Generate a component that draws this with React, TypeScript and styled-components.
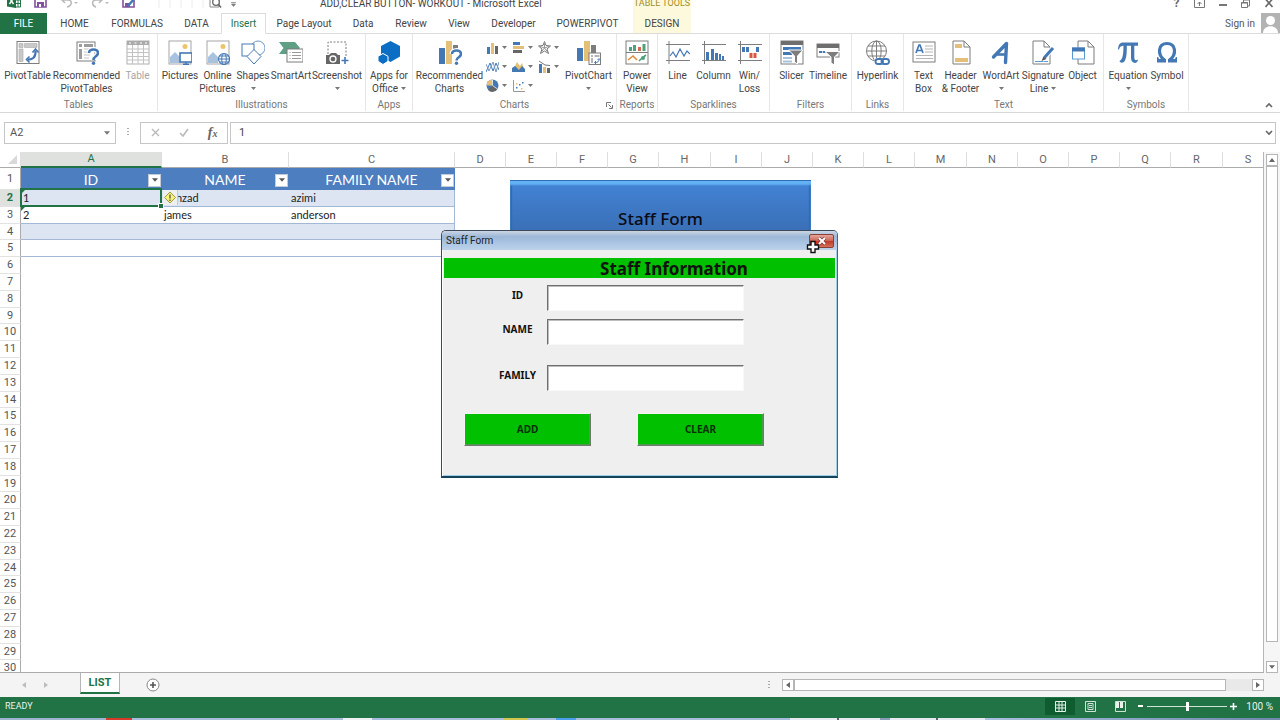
import React from "react";
import styled, { createGlobalStyle, css } from "styled-components";

const UI = `Roboto, "Noto Sans", sans-serif`;
const SHEET = `Lato, "Noto Sans", sans-serif`;
const FORM = `"Noto Sans", "Open Sans", sans-serif`;
const GREEN = "#217346";
const BLUE = "#4478b4";
const GRAY = "#7d7d7d";
const GOLD = "#e4bf77";

const Global = createGlobalStyle`
  * { box-sizing: border-box; }
  body { margin: 0; font-family: ${UI}; font-size: 10px; line-height: 13px; color: #444; background: #fff; }
  button, input { font: inherit; color: inherit; margin: 0; padding: 0; border: 0; border-radius: 0; background: none; }
  svg { display: block; flex: none; }
`;

const Page = styled.div`
  display: flex;
  flex-direction: column;
  height: 100vh;
  overflow: hidden;
`;

/* ---------- title bar and tabs ---------- */

const TitleBar = styled.header`
  display: flex;
  align-items: flex-end;
  height: 13px;
  flex: none;
  overflow: hidden;
`;
const QuickAccess = styled.div`
  display: flex;
  align-items: flex-end;
  flex: none;
  width: 320px;
  gap: 13px;
  padding: 0 0 5px 7px;
`;
const WindowTitle = styled.div`
  flex: none;
  width: 313px;
  padding-bottom: 3px;
  white-space: nowrap;
`;
const ContextTitle = styled.div`
  flex: none;
  width: 58px;
  height: 20px;
  display: flex;
  align-items: flex-end;
  justify-content: center;
  padding-bottom: 3px;
  font-size: 9px;
  color: #a08c28;
  background: #fdf9dc;
  white-space: nowrap;
`;
const WindowButtons = styled.div`
  display: flex;
  margin-left: auto;
  padding-bottom: 3px;
`;
const WindowButton = styled.button`
  display: flex;
  align-items: center;
  justify-content: center;
  width: 23px;
  height: 13px;
  font-size: 12px;
  font-weight: 700;
  color: #666;
`;
const TabRow = styled.nav`
  display: flex;
  flex: none;
  height: 21px;
  border-bottom: 1px solid #dcdcdc;
`;
const Tab = styled.button<{ $w: number; $kind?: "file" | "active" | "context" }>`
  flex: none;
  width: ${(p) => p.$w}px;
  height: 21px;
  white-space: nowrap;
  ${(p) => p.$kind === "file" && css`background: ${GREEN}; color: #fff;`}
  ${(p) => p.$kind === "active" && css`
    background: #fff; color: ${GREEN};
    border: 1px solid #dcdcdc; border-bottom-color: #fff;
  `}
  ${(p) => p.$kind === "context" && css`background: #fdf9dc; margin-left: 5px; height: 20px;`}
`;
const Account = styled.div`
  display: flex;
  align-items: center;
  gap: 6px;
  margin-left: auto;
  a { color: #555; text-decoration: none; }
`;

/* ---------- ribbon ---------- */

const Ribbon = styled.div`
  display: flex;
  flex: none;
  height: 79px;
  border-bottom: 1px solid #d8d8d8;
`;
const Group = styled.section<{ $w: number }>`
  position: relative;
  display: flex;
  flex-direction: column;
  flex: none;
  width: ${(p) => p.$w}px;
  height: 77px;
  padding-top: 6px;
  border-right: 1px solid #e6e6e6;
`;
const GroupItems = styled.div`
  display: flex;
  justify-content: center;
  flex: 1;
`;
const GroupName = styled.div`
  display: flex;
  justify-content: center;
  color: #777;
  height: 13px;
`;
const Launcher = styled.button`
  position: absolute;
  right: 2px;
  bottom: 2px;
  width: 8px;
  height: 8px;
`;
const Big = styled.button<{ $w: number; $off?: boolean }>`
  display: flex;
  flex-direction: column;
  align-items: center;
  flex: none;
  width: ${(p) => p.$w}px;
  white-space: nowrap;
  color: ${(p) => (p.$off ? "#a6a6a6" : "#444")};
  svg.icon { margin-bottom: 4px; }
`;
const Line = styled.span`
  display: flex;
  align-items: center;
  justify-content: center;
  gap: 3px;
  height: 13px;
`;
const MiniGrid = styled.div`
  display: grid;
  grid-template-columns: repeat(3, 26px);
  grid-auto-rows: 19px;
  width: 80px;
  padding-left: 2px;
`;
const Mini = styled.button`
  display: flex;
  align-items: center;
  gap: 3px;
  height: 14px;
`;
const Collapse = styled.button`
  align-self: flex-end;
  margin: 0 7px 3px auto;
  height: 8px;
`;

/* ---------- formula bar ---------- */

const FormulaBar = styled.div`
  display: flex;
  flex: none;
  align-items: center;
  height: 39px;
  padding: 0 4px;
`;
const Box = styled.div<{ $w?: number }>`
  display: flex;
  align-items: center;
  justify-content: space-between;
  height: 22px;
  border: 1px solid #c6c6c6;
  ${(p) => (p.$w ? css`flex: none; width: ${p.$w}px;` : css`flex: 1;`)}
`;
const NameInput = styled.input`
  width: 80px;
  padding-left: 5px;
  font-size: 11px;
  color: #555;
`;
const FormulaInput = styled.input`
  flex: 1;
  padding-left: 8px;
  font-size: 11px;
`;
const BarButton = styled.button<{ $w?: number }>`
  display: flex;
  align-items: center;
  justify-content: center;
  width: ${(p) => p.$w ?? 29}px;
  height: 20px;
`;
const FxText = styled.i`
  font-family: "Liberation Serif", serif;
  font-size: 14px;
  font-weight: 700;
  color: #666;
  sub { font-size: 10px; vertical-align: baseline; }
`;
const BoxGap = styled.div`
  flex: none;
  width: 2px;
`;
const Chevron = styled.button`
  padding: 0 2px;
`;
const Grip = styled.div`
  flex: none;
  width: 24px;
  display: flex;
  justify-content: center;
`;

/* ---------- sheet ---------- */

const SheetArea = styled.main`
  position: relative;
  display: flex;
  flex: 1;
  min-height: 0;
  overflow: hidden;
`;
const GridPane = styled.div`
  flex: 1;
  min-width: 0;
  overflow: hidden;
  border-right: 1px solid #b5b5b5;
  border-bottom: 1px solid #ababab;
`;
const Grid = styled.table`
  table-layout: fixed;
  width: 0;
  border-collapse: separate;
  border-spacing: 0;
  font-size: 11px;
  td, th { padding: 0; font-weight: 400; overflow: hidden; white-space: nowrap; }
`;
const ColHead = styled.th<{ $on?: boolean }>`
  height: 16px;
  line-height: 14px;
  color: ${(p) => (p.$on ? GREEN : "#666")};
  background: ${(p) => (p.$on ? "#dfe1df" : "#fff")};
  border-right: 1px solid #dedede;
  border-bottom: ${(p) => (p.$on ? `2px solid ${GREEN}` : "1px solid #ababab")};
`;
const Corner = styled.td`
  border-bottom: 1px solid #ababab;
  border-right: 1px solid #dedede;
  svg { margin-left: 8px; }
`;
const Row = styled.tr<{ $h: number }>`
  height: ${(p) => p.$h}px;
  line-height: 14px;
`;
const RowHead = styled.th<{ $on?: boolean }>`
  && { font-weight: ${(p) => (p.$on ? 700 : 400)}; }
  color: ${(p) => (p.$on ? GREEN : "#555")};
  background: ${(p) => (p.$on ? "#dfe1df" : "#fff")};
  border-right: 1px solid #ababab;
  border-bottom: 1px solid #e2e2e2;
`;
const HeadCell = styled.td`
  background: #4d7ebf;
  color: #fff;
  font-family: ${SHEET};
  font-size: 14px;
  text-align: center;
`;
const HeadInner = styled.div`
  display: grid;
  grid-template-columns: 1fr auto 1fr;
  align-items: center;
  padding: 2px 1px 0 0;
  button { justify-self: end; }
`;
const FilterButton = styled.button`
  display: flex;
  align-items: center;
  justify-content: center;
  width: 13px;
  height: 13px;
  background: #fff;
  border: 1px solid #c3cbd6;
`;
const Cell = styled.td<{ $band?: boolean; $last?: boolean }>`
  position: relative;
  color: #222;
  font-family: ${SHEET};
  background: ${(p) => (p.$band ? "#dce5f1" : "#fff")};
  border-bottom: 1px solid #a3b8d6;
  ${(p) => p.$last && css`border-right: 1px solid #a3b8d6;`}
  && { padding-left: 2px; }
`;
const ErrorMark = styled.span`
  position: absolute;
  left: 0;
  top: 0;
  border-top: 4px solid ${GREEN};
  border-right: 4px solid transparent;
`;
const Selection = styled.div`
  position: absolute;
  left: 20px;
  top: 36px;
  width: 142px;
  height: 19px;
  border: 2px solid ${GREEN};
  &::after {
    content: "";
    position: absolute;
    right: -3px;
    bottom: -3px;
    width: 4px;
    height: 4px;
    background: ${GREEN};
    outline: 1px solid #fff;
  }
`;
const Warning = styled.button`
  position: absolute;
  left: 163px;
  top: 38px;
  width: 15px;
  height: 15px;
  background: #eef0ee;
  border-right: 1px solid #c9c9c9;
`;
const ShapeButton = styled.button`
  position: absolute;
  left: 510px;
  top: 28px;
  width: 301px;
  height: 78px;
  padding-bottom: 2px;
  background: linear-gradient(#4383d6, #3566a6);
  box-shadow: inset 0 1px #2f6fb8, inset 0 5px 2px #62b2f4, inset 2px 0 1px #2f66ac, inset -2px 0 1px #2f66ac;
  font-family: ${FORM};
  font-size: 17px;
  font-weight: 500;
  color: #0a0a14;
`;

/* ---------- scroll bars ---------- */

const VScroll = styled.div`
  display: flex;
  flex-direction: column;
  align-items: center;
  flex: none;
  width: 16px;
  padding: 2px 0 0 0;
  background: #f6f6f6;
`;
const ScrollButton = styled.button`
  display: flex;
  align-items: center;
  justify-content: center;
  flex: none;
  width: 12px;
  height: 12px;
  background: #fff;
  border: 1px solid #b5b5b5;
`;
const VThumb = styled.div`
  flex: 1;
  width: 12px;
  margin-bottom: 19px;
  border: 1px solid #b5b5b5;
  background: #fff;
`;
const HTrack = styled.div`
  display: flex;
  flex: none;
  width: 482px;
  height: 12px;
  background: #e9e9e9;
`;
const HThumb = styled.div`
  width: 432px;
  margin-right: auto;
  border: 1px solid #b5b5b5;
  background: #fff;
`;

/* ---------- user form ---------- */

const Dialog = styled.form`
  position: absolute;
  left: 441px;
  top: 78px;
  width: 397px;
  height: 248px;
  display: flex;
  flex-direction: column;
  border: 1px solid #3b4a5c;
  border-right: 1px solid #2c6f8f;
  border-bottom: 2px solid #14435c;
  border-radius: 5px 5px 0 0;
  background: #efefef;
  box-shadow: inset 1px 0 #fff, inset -1px -1px #9fd0e6;
  font-family: ${FORM};
  color: #111;
`;
const DialogTitle = styled.div`
  display: flex;
  align-items: center;
  justify-content: space-between;
  flex: none;
  height: 19px;
  padding: 0 3px 0 4px;
  border-radius: 4px 4px 0 0;
  background: linear-gradient(#cbd5e2, #9db8d8 30%, #a9c4e2 60%, #bcd2ea);
`;
const DialogCaption = styled.span`
  font-family: ${UI};
  color: #222;
`;
const CloseButton = styled.button`
  display: flex;
  align-items: center;
  justify-content: center;
  width: 25px;
  height: 14px;
  border: 1px solid #8a4038;
  border-radius: 2px;
  background: linear-gradient(#e3a79c, #d0695a 45%, #c03a28 55%, #d4715c);
`;
const Banner = styled.h1`
  margin: 8px 0 7px 2px;
  padding-left: 69px;
  width: 391px;
  height: 20px;
  line-height: 22px;
  background: #00c000;
  font-size: 17px;
  font-weight: 700;
  text-align: center;
`;
const Field = styled.label<{ $after: number }>`
  display: flex;
  width: 302px;
  height: 26px;
  margin-bottom: ${(p) => p.$after}px;
  font-weight: 700;
`;
const FieldName = styled.span`
  width: 59px;
  margin-left: 46px;
  line-height: 21px;
  text-align: center;
`;
const FieldInput = styled.input`
  width: 197px;
  height: 26px;
  padding: 0 4px;
  background: #fff;
  border: 1px solid;
  border-color: #6f6f6f #f8f8f8 #f8f8f8 #6f6f6f;
  box-shadow: inset 1px 1px #bdbdbd;
`;
const Actions = styled.div`
  display: flex;
  gap: 46px;
  padding-left: 22px;
`;
const ActionButton = styled.button`
  width: 127px;
  height: 33px;
  background: #00c000;
  border: 1px solid;
  border-color: #f4f4f4 #6f7a6f #6f7a6f #f4f4f4;
  box-shadow: inset -1px -1px #4f9a4f;
  font-weight: 700;
  color: #0a300a;
`;
const Pointer = styled.svg`
  position: absolute;
  left: 806px;
  top: 88px;
`;

/* ---------- sheet tabs, status bar, task bar ---------- */

const SheetTabs = styled.div`
  display: flex;
  align-items: center;
  flex: none;
  height: 24px;
  padding-right: 16px;
  background: #f5f4f5;
`;
const NavArrows = styled.div`
  display: flex;
  gap: 18px;
  width: 80px;
  padding-left: 22px;
`;
const SheetTab = styled.button`
  align-self: flex-start;
  width: 40px;
  height: 21px;
  border: 1px solid #b5b5b5;
  border-top: 0;
  border-bottom: 2px solid ${GREEN};
  background: #fff;
  color: ${GREEN};
  font-size: 11px;
  font-weight: 700;
`;
const AddSheet = styled.button`
  margin-left: 26px;
`;
const SheetGrip = styled.div`
  margin: 0 12px 0 auto;
`;
const StatusBar = styled.footer`
  display: flex;
  align-items: center;
  flex: none;
  height: 21px;
  padding: 0 7px 3px 5px;
  background: ${GREEN};
  color: #e9f2ec;
`;
const StatusText = styled.span`
  font-size: 9px;
  margin-right: auto;
`;
const ViewButton = styled.button<{ $on?: boolean }>`
  display: flex;
  align-items: center;
  justify-content: center;
  width: 30px;
  height: 17px;
  background: ${(p) => (p.$on ? "#0e5c2f" : "transparent")};
`;
const ZoomStep = styled.button`
  display: flex;
  align-items: center;
  justify-content: center;
  width: 12px;
  height: 13px;
`;
const ZoomRange = styled.input`
  appearance: none;
  width: 80px;
  height: 12px;
  background: linear-gradient(#cfe3d7, #cfe3d7) center / 100% 1px no-repeat;
  &::-webkit-slider-thumb {
    appearance: none;
    width: 3px;
    height: 9px;
    background: #fff;
  }
`;
const ZoomValue = styled.output`
  width: 34px;
  text-align: right;
`;
const TaskBar = styled.div`
  flex: none;
  height: 2px;
  background: linear-gradient(
    90deg,
    #9db3cf 0 106px, #d8392c 106px 132px, #a8bddd 132px 343px, #eef2f2 343px 372px,
    #a8bddd 372px 503px, #d3c64f 503px 528px, #a8bddd 528px 556px, #4ea0ee 556px 576px,
    #a8bddd 576px 790px, #e6e9f0 790px 837px, #56606e 837px 839px, #e6e9f0 839px 880px,
    #8c9db8 880px 890px, #e6e9f0 890px 936px, #56606e 936px 938px, #e6e9f0 938px 985px,
    #a9c0de 985px, #7089ad 1268px
  );
`;

/* ---------- icons ---------- */

const Caret = ({ s = 5, c = "#777" }: { s?: number; c?: string }) => (
  <svg width={s} height={s - 2} viewBox="0 0 6 3.6"><path d="M0 0h6L3 3.6z" fill={c} /></svg>
);

const Icon = ({ children }: { children: React.ReactNode }) => (
  <svg className="icon" width="24" height="25" viewBox="0 0 24 25" fill="none" strokeLinecap="butt">{children}</svg>
);
const Small = ({ children }: { children: React.ReactNode }) => (
  <svg width="13" height="13" viewBox="0 0 13 13" fill="none">{children}</svg>
);

const icons: Record<string, React.ReactNode> = {
  pivot: (
    <Icon>
      <rect x="1" y="1.500" width="22" height="22" stroke={GRAY} fill="#fff" />
      <path d="M3 3.500h4v4H3zM3 9h4v12.500H3zM8.500 3.500H21v4H8.500z" fill="#c9c9c9" stroke="#aaa" strokeWidth=".6" />
      <path d="M11.500 19.500c5 .500 8.500-2 8-9" stroke={BLUE} strokeWidth="2.200" />
      <path d="M16.500 12.500l3-3.500 3 3.500M13.500 16.500l-3 3 3 3" stroke={BLUE} strokeWidth="1.600" />
    </Icon>
  ),
  recPivot: (
    <Icon>
      <rect x="2" y="2" width="18" height="19" stroke={GRAY} fill="#fff" />
      <path d="M4 4h3v3H4zM4 9h3v10H4zM9 4h9v3H9z" fill="#9c9c9c" />
      <path d="M9 9h9M9 12h6M9 15h6M9 18h5" stroke="#c4c4c4" />
      <path d="M14 13c0-4 9-5 9 0 0 3.500-4.500 3-4.500 7" stroke="#fff" strokeWidth="5" />
      <path d="M14 13c0-4.500 9-5 9 0 0 3.500-4.500 3-4.500 7" stroke={BLUE} strokeWidth="2.600" />
      <circle cx="18.500" cy="23.200" r="1.700" fill={BLUE} />
    </Icon>
  ),
  table: (
    <Icon>
      <rect x="1" y="1" width="22" height="23" stroke="#b0b0b0" fill="#fff" />
      <path d="M1 1h22v4H1z" fill="#aaa" />
      <path d="M1 9h22M1 12.500h22M1 16.500h22M1 20h22M6.500 5v19M12 5v19M17.500 5v19" stroke="#c2c2c2" />
      <path d="M3 3h2M8.500 3h2M14 3h2M19 3h2" stroke="#fff" />
    </Icon>
  ),
  pictures: (
    <Icon>
      <rect x="1" y="1" width="22" height="23" stroke="#a5a5a5" fill="#fff" />
      <path d="M2 23V17l5-5 5 5v6z" fill="#a9c3df" />
      <circle cx="17" cy="6.500" r="2.500" fill="#ecc56a" />
      <rect x="12" y="13" width="12" height="9" fill="#fff" stroke={BLUE} strokeWidth="1.600" />
      <path d="M15 24.300h6M18 22v2" stroke={BLUE} strokeWidth="1.400" />
    </Icon>
  ),
  online: (
    <Icon>
      <rect x="1" y="1" width="22" height="23" stroke="#a5a5a5" fill="#fff" />
      <path d="M2 23V17l5-5 5 5v6z" fill="#a9c3df" />
      <circle cx="17" cy="6.500" r="2.500" fill="#ecc56a" />
      <circle cx="18" cy="19" r="5.500" fill="#fff" stroke={BLUE} strokeWidth="1.200" />
      <ellipse cx="18" cy="19" rx="2.300" ry="5.500" stroke={BLUE} />
      <path d="M12.500 19h11M13.500 16h9M13.500 22h9" stroke={BLUE} />
    </Icon>
  ),
  shapes: (
    <Icon>
      <circle cx="17" cy="8" r="7" stroke="#6e97c6" fill="#fff" />
      <rect x="1" y="4" width="12" height="12" stroke={BLUE} fill="#fff" />
      <path d="M13 9.500l7 7-7 7.500-7-7.500z" stroke={BLUE} fill="#fff" />
    </Icon>
  ),
  smartart: (
    <Icon>
      <path d="M0 2h16l5 6-5 6H0l4.500-6z" fill="#5f9f84" />
      <rect x="8" y="9" width="16" height="13" fill="#fff" stroke={GRAY} />
      <path d="M10.500 12.500h1M10.500 15.500h1M10.500 18.500h1M13 12.500h9M13 15.500h9M13 18.500h9" stroke="#9a9a9a" />
    </Icon>
  ),
  screenshot: (
    <Icon>
      <path d="M3 14V2h18v15" stroke={GRAY} strokeDasharray="2 1.500" />
      <path d="M1 15h3l2-2h5l2 2h2v9H1z" fill="#666" />
      <circle cx="8" cy="19" r="3" stroke="#fff" strokeWidth="1.300" />
      <path d="M20 17v7M16.500 20.500h7" stroke={BLUE} strokeWidth="1.600" />
    </Icon>
  ),
  apps: (
    <Icon>
      <path d="M13.500 1l9.500 5v10.500L13.500 22 4 16.500V6z" fill="#0a6fc4" />
      <path d="M6 13.500l5 2.800v5L6 24.500l-5-3.200v-5z" fill="#0a6fc4" stroke="#fff" />
    </Icon>
  ),
  recChart: (
    <Icon>
      <path d="M1 8h6v16H1z" fill={BLUE} />
      <path d="M8 1h6v23H8z" fill={GOLD} />
      <path d="M15 5h5v5h-5z" fill={GRAY} />
      <path d="M14 14c0-4.500 9-5 9 0 0 3.500-4.500 3-4.500 6.500" stroke="#fff" strokeWidth="5" />
      <path d="M14 14c0-4.500 9-5 9 0 0 3.500-4.500 3-4.500 6.500" stroke={BLUE} strokeWidth="2.600" />
      <circle cx="18.500" cy="23.200" r="1.700" fill={BLUE} />
    </Icon>
  ),
  pivotChart: (
    <Icon>
      <path d="M0 8h6v13H0z" fill={BLUE} />
      <path d="M7 1h6v20H7z" fill={GOLD} />
      <path d="M14 5h5v8h-5z" fill={GRAY} />
      <rect x="12" y="13" width="11.500" height="11.500" fill="#fff" stroke={GRAY} />
      <path d="M14 15h2v2h-2zM14 18h2v5h-2zM17.500 15h5v2h-5z" fill="#b5b5b5" />
      <path d="M18 22.500c3 0 4-1 4-3.500M20.500 20l1.500-1.500 1.500 1.500M19 21l-1.500 1.500L19 24" stroke={BLUE} />
    </Icon>
  ),
  power: (
    <Icon>
      <rect x="1" y="1" width="22" height="23" stroke={GRAY} fill="#fff" />
      <path d="M1 12.500h22" stroke={GRAY} />
      <path d="M4 7h3v4H4z" fill="#4fa07c" />
      <path d="M8 5h3v6H8z" fill="#4fa07c" />
      <path d="M13 7h3v4h-3z" fill="#d9694c" />
      <path d="M17.500 4h3v7h-3z" fill="#4fa07c" />
      <path d="M3 20l5-4 4 4" stroke="#dd8b3c" strokeWidth="1.600" />
      <path d="M14 21l3-3 4-3" stroke="#4fa07c" strokeWidth="1.600" />
      <circle cx="18" cy="18" r="2" fill="#4fa07c" />
    </Icon>
  ),
  line: (
    <Icon>
      <path d="M3 1v23M0 4.500h24M0 20.500h24" stroke={GRAY} />
      <path d="M4 16l3-4 3 5 4-8 4 7 3-5 3 3" stroke={BLUE} strokeWidth="1.200" />
    </Icon>
  ),
  column: (
    <Icon>
      <path d="M2.500 1v23M0 4.500h24M0 20.500h24" stroke={GRAY} />
      <path d="M4 12h3v8H4zM9 9h3v11H9zM13 13h3v7h-3zM17 14h2v6h-2zM20 16h2v4h-2z" fill={BLUE} />
    </Icon>
  ),
  winloss: (
    <Icon>
      <path d="M2.500 1v23M0 4.500h24M0 20.500h24" stroke={GRAY} />
      <path d="M4 7h3v5H4zM8 7h3v5H8zM18 7h3v5h-3z" fill={BLUE} />
      <path d="M11.500 13h3v5h-3zM15.500 13h3v5h-3z" fill="#d9573f" />
    </Icon>
  ),
  slicer: (
    <Icon>
      <rect x="1" y="1" width="22" height="23" stroke={GRAY} fill="#fff" />
      <path d="M1 1h22v4H1z" fill="#6e6e6e" />
      <path d="M3 7h18v3H3zM3 12h9v3H3z" fill={BLUE} />
      <path d="M3 17h9v2H3zM3 20.500h9v2H3z" fill="#a9c3df" />
      <path d="M8.500 10H23l-5.500 6v8l-3-2v-6z" fill={GRAY} stroke="#fff" />
    </Icon>
  ),
  timeline: (
    <Icon>
      <rect x="1" y="4" width="22" height="13" stroke={GRAY} fill="#fff" />
      <path d="M1 4h22v4H1z" fill="#6e6e6e" />
      <path d="M3 12h8" stroke={BLUE} strokeWidth="2" strokeDasharray="3 .7" />
      <path d="M9 11.500h15l-5.500 5.500v8l-3.500-2v-6z" fill={GRAY} stroke="#fff" />
    </Icon>
  ),
  hyperlink: (
    <Icon>
      <circle cx="10.500" cy="11" r="10" stroke={GRAY} />
      <ellipse cx="10.500" cy="11" rx="4.700" ry="10" stroke={GRAY} />
      <path d="M10.500 1v20M.5 11h20M2 6h17M2 16h17" stroke={GRAY} />
      <path d="M8.500 18H24v7H8.500z" fill="#fff" />
      <rect x="9.500" y="19" width="7.500" height="5" rx="2.500" stroke={BLUE} strokeWidth="1.900" />
      <rect x="15.500" y="19" width="7.500" height="5" rx="2.500" stroke={BLUE} strokeWidth="1.900" />
    </Icon>
  ),
  textbox: (
    <Icon>
      <rect x="1" y="2" width="22" height="20" stroke={GRAY} fill="#fff" />
      <path d="M4 13L7 5h1l3 8M5.200 10.500h4.600" stroke={BLUE} strokeWidth="1.700" />
      <path d="M13 6h8M13 9h8M13 12h8M4 15.500h17M4 18.500h17" stroke="#b5b5b5" />
    </Icon>
  ),
  header: (
    <Icon>
      <path d="M4 1h11l6 6v17H4z" stroke={GRAY} fill="#fff" />
      <path d="M15 1v6h6" stroke={GRAY} />
      <path d="M6 4h7v4H6zM6 18h13v4H6z" fill={GOLD} />
    </Icon>
  ),
  wordart: (
    <Icon>
      <path d="M4.500 17L17.500 3.500l-1 19" stroke={BLUE} strokeWidth="3.400" strokeLinejoin="round" strokeLinecap="round" />
      <path d="M8 14.500h9" stroke={BLUE} strokeWidth="2.600" />
    </Icon>
  ),
  signature: (
    <Icon>
      <path d="M2 1h11l6 6v17H2z" stroke={GRAY} fill="#fff" />
      <path d="M13 1v6h6" stroke={GRAY} />
      <path d="M4 21.500h13" stroke="#5b9bd5" />
      <path d="M22 8L11 20" stroke="#fff" strokeWidth="5" />
      <path d="M22 8L13.500 17.500" stroke={BLUE} strokeWidth="3" />
      <path d="M12.500 16.500l3 2.500-5 2z" fill="#555" />
    </Icon>
  ),
  object: (
    <Icon>
      <path d="M7 1h10l6 6v17H7z" stroke={GRAY} fill="#fff" />
      <path d="M17 1v6h6" stroke={GRAY} />
      <rect x="1.500" y="8" width="12" height="11" stroke="#5b9bd5" fill="#fff" />
      <path d="M1 7.500h13v4H1z" fill={BLUE} />
    </Icon>
  ),
  pi: (
    <Icon>
      <path d="M2 9.500C2.500 4 4 2.500 8 2.500h14v3.300H8c-3 0-4 .700-5 3.700z" fill={BLUE} />
      <path d="M7.500 5h3.300c0 7 0 12-1.800 15.500-1.500 3-5 2.500-5.500.500 3-1.500 4-6 4-16zM15 5h3.300v12c0 3.500 1.500 4 3.700 2.500-.2 5-7 4.500-7-1.500z" fill={BLUE} />
    </Icon>
  ),
  omega: (
    <Icon>
      <path d="M9.500 20C2 14.500 3 3.500 12 3.500s10 11 2.500 16.500" stroke={BLUE} strokeWidth="3.200" />
      <path d="M2 17h1.200c.3 1.800.8 2 2.300 2h5.500v3.500H2zM22 17h-1.200c-.3 1.800-.8 2-2.300 2H13v3.500h9z" fill={BLUE} />
    </Icon>
  ),
};

const miniIcons: React.ReactNode[] = [
  <Small key="c"><path d="M1 6h3v7H1z" fill={BLUE} /><path d="M5 2h3v11H5z" fill={GOLD} /><path d="M9 5h3v8H9z" fill="#666" /></Small>,
  <Small key="b"><path d="M1 1h7v3H1z" fill={BLUE} /><path d="M1 5h11v3H1z" fill={GOLD} /><path d="M1 9h9v3H1z" fill="#666" /></Small>,
  <Small key="r"><path d="M6.500 .5L8 4.500l4.500.5L9 8l1.500 4.500-4-2.500-4 2.500L4 8 .5 5 5 4.500z" stroke="#777" /><path d="M6.500 1v6M12 5L6.500 7l4 5M2.500 12l4-5L1 5" stroke="#999" /></Small>,
  <Small key="l"><path d="M0 12l4-9 3 8 3-8 3 7" stroke={BLUE} /><path d="M0 4l3 7 4-9 3 10 3-10" stroke="#7397c2" /></Small>,
  <Small key="a"><path d="M0 12l5-10 3 4 2-3 3 9z" fill={GOLD} /><path d="M0 12V8l3-2 4 4 3-4 3 3v3z" fill={BLUE} /></Small>,
  <Small key="m"><path d="M1 4h3v9H1z" fill={BLUE} /><path d="M5 7h3v6H5z" fill={GOLD} /><path d="M9 8h3v5H9z" fill="#666" /><path d="M1 1l6 4 5 .500" stroke="#777" /></Small>,
  <Small key="p"><circle cx="6.500" cy="6.500" r="6" fill={BLUE} /><path d="M6.500 6.500V.5a6 6 0 0 0-6 6z" fill={GOLD} /><path d="M6.500 6.500L2 11a6 6 0 0 0 9.500-1z" fill="#666" /><path d="M6.500.5v6l5 3.500" stroke="#fff" strokeWidth=".7" /></Small>,
  <Small key="s"><path d="M1.500 1v11.500H13" stroke="#999" /><path d="M4 8h1.500v1.500H4zM7 5h1.500v1.500H7zM10 3h1.500v1.500H10z" fill={BLUE} /><path d="M4 4h1.500v1.500H4zM9 9h1.500v1.500H9z" fill={GOLD} /></Small>,
];

/* ---------- data ---------- */

type Item = { icon: string; w: number; lines: string[]; drop?: boolean; off?: boolean };

const groups: { name: string; w: number; items: Item[] }[] = [
  { name: "Tables", w: 158, items: [
    { icon: "pivot", w: 51, lines: ["PivotTable"] },
    { icon: "recPivot", w: 67, lines: ["Recommended", "PivotTables"] },
    { icon: "table", w: 35, lines: ["Table"], off: true },
  ] },
  { name: "Illustrations", w: 208, items: [
    { icon: "pictures", w: 38, lines: ["Pictures"] },
    { icon: "online", w: 37, lines: ["Online", "Pictures"] },
    { icon: "shapes", w: 34, lines: ["Shapes", ""], drop: true },
    { icon: "smartart", w: 42, lines: ["SmartArt"] },
    { icon: "screenshot", w: 50, lines: ["Screenshot", ""], drop: true },
  ] },
  { name: "Apps", w: 47, items: [{ icon: "apps", w: 46, lines: ["Apps for", "Office"], drop: true }] },
  { name: "Charts", w: 204, items: [
    { icon: "recChart", w: 68, lines: ["Recommended", "Charts"] },
    { icon: "pivotChart", w: 50, lines: ["PivotChart", ""], drop: true },
  ] },
  { name: "Reports", w: 41, items: [{ icon: "power", w: 40, lines: ["Power", "View"] }] },
  { name: "Sparklines", w: 112, items: [
    { icon: "line", w: 36, lines: ["Line"] },
    { icon: "column", w: 36, lines: ["Column"] },
    { icon: "winloss", w: 36, lines: ["Win/", "Loss"] },
  ] },
  { name: "Filters", w: 82, items: [
    { icon: "slicer", w: 35, lines: ["Slicer"] },
    { icon: "timeline", w: 38, lines: ["Timeline"] },
  ] },
  { name: "Links", w: 52, items: [{ icon: "hyperlink", w: 50, lines: ["Hyperlink"] }] },
  { name: "Text", w: 200, items: [
    { icon: "textbox", w: 34, lines: ["Text", "Box"] },
    { icon: "header", w: 40, lines: ["Header", "& Footer"] },
    { icon: "wordart", w: 41, lines: ["WordArt", ""], drop: true },
    { icon: "signature", w: 43, lines: ["Signature", "Line"], drop: true },
    { icon: "object", w: 36, lines: ["Object"] },
  ] },
  { name: "Symbols", w: 85, items: [
    { icon: "pi", w: 42, lines: ["Equation", ""], drop: true },
    { icon: "omega", w: 36, lines: ["Symbol"] },
  ] },
];

const tabs: [string, number, ("file" | "active" | "context")?][] = [
  ["FILE", 47, "file"], ["HOME", 55], ["FORMULAS", 70], ["DATA", 49], ["Insert", 45, "active"],
  ["Page Layout", 76], ["Data", 42], ["Review", 54], ["View", 42], ["Developer", 67],
  ["POWERPIVOT", 81], ["DESIGN", 58, "context"],
];

const wideCols = [141, 127, 166];
const letters = "DEFGHIJKLMNOPQRS".split("");
const people = [["1", "behzad", "azimi"], ["2", "james", "anderson"], ["", "", ""], ["", "", ""]];
const emptyRows = Array.from({ length: 25 }, (_, i) => i + 6);
const rowHeight = (n: number) => (n % 5 === 4 ? 16 : 17);

const BigButton = ({ item }: { item: Item }) => (
  <Big $w={item.w} $off={item.off} type="button">
    {icons[item.icon]}
    {item.lines.map((text, i) => (
      <Line key={i}>
        {text}
        {item.drop && i === item.lines.length - 1 && <Caret />}
      </Line>
    ))}
  </Big>
);

export default function App() {
  return (
    <Page>
      <Global />
      <TitleBar>
        <QuickAccess>
          <svg width="14" height="14" viewBox="0 0 14 14"><path d="M8 2h5.500v11H8" fill="#fff" stroke={GREEN} /><path d="M9 6h4M9 9.500h4M11 3v10" stroke={GREEN} /><path d="M0 2l9-2v14l-9-1.500z" fill={GREEN} /><path d="M2.500 4l4 6M6.500 4l-4 6" stroke="#fff" strokeWidth="1.400" /></svg>
          <svg width="13" height="14" viewBox="0 0 13 14"><path d="M1 1h11v12H1z" fill="#fff" stroke="#8350a0" strokeWidth="1.600" /><path d="M3 8h7v5H3z" fill="#8350a0" /><path d="M5 10h2v3H5z" fill="#fff" /></svg>
          <svg width="18" height="14" viewBox="0 0 18 14" fill="none"><path d="M2 6h6c5 0 4 6-1 7M5 3L2 6l3 3" stroke="#b9b9b9" strokeWidth="1.500" /><path d="M14 8h4l-2 2z" fill="#b9b9b9" /></svg>
          <svg width="18" height="14" viewBox="0 0 18 14" fill="none"><path d="M10 6H5c-5 0-4 6 0 7M8 3l3 3-3 3" stroke="#b9b9b9" strokeWidth="1.500" /><path d="M14 8h4l-2 2z" fill="#b9b9b9" /></svg>
          <svg width="13" height="14" viewBox="0 0 13 14"><path d="M1 1h11v12H1z" fill="#fff" stroke="#8350a0" strokeWidth="1.600" /><path d="M3 9h5v4H3z" fill="#8350a0" /><path d="M12 5l-6 7" stroke={BLUE} strokeWidth="2.400" /></svg>
          <svg width="92" height="14" viewBox="0 0 92 14" fill="none"><path d="M11 0v14M22 0v14M33 0v14M44 0v14M55 0v14" stroke="#ececec" /><path d="M68 1h9v12h-9z" stroke="#8a8a8a" transform="translate(-6 0)" /><circle cx="68" cy="8" r="3.300" fill="#fff" stroke="#666" strokeWidth="1.300" /><path d="M70.500 10.500l2.500 3" stroke="#666" strokeWidth="1.600" /><path d="M83 8.500h5M83.500 10h4l-2 2.500z" stroke="#888" strokeWidth=".8" fill="#777" /></svg>
        </QuickAccess>
        <WindowTitle>ADD,CLEAR BUTTON- WORKOUT - Microsoft Excel</WindowTitle>
        <ContextTitle>TABLE TOOLS</ContextTitle>
        <WindowButtons>
          <WindowButton aria-label="Help">?</WindowButton>
          <WindowButton aria-label="Ribbon display options">
            <svg width="11" height="11" viewBox="0 0 11 11" fill="none"><path d="M.5.5h10v9H.5z" stroke="#777" /><path d="M5.500 8V4M3.500 6l2-2 2 2" stroke="#777" /></svg>
          </WindowButton>
          <WindowButton aria-label="Minimize">
            <svg width="8" height="11" viewBox="0 0 8 11"><path d="M0 6h8v2H0z" fill="#777" /></svg>
          </WindowButton>
          <WindowButton aria-label="Restore">
            <svg width="9" height="10" viewBox="0 0 9 10" fill="none"><path d="M.5 3.500h6v5h-6zM2.500 3V1h6v6H7M0 4h7" stroke="#777" /></svg>
          </WindowButton>
          <WindowButton aria-label="Close">
            <svg width="8" height="9" viewBox="0 0 8 9" fill="none"><path d="M.5 0l7 8M7.500 0l-7 8" stroke="#666" strokeWidth="1.600" /></svg>
          </WindowButton>
        </WindowButtons>
      </TitleBar>

      <TabRow>
        {tabs.map(([label, w, kind]) => (
          <Tab key={label} $w={w} $kind={kind} type="button">{label}</Tab>
        ))}
        <Account>
          <a href="#signin">Sign in</a>
          <svg width="19" height="20" viewBox="0 0 19 20"><path d="M0 0h19v20H0z" fill="#b3b3b3" /><circle cx="9.500" cy="7.500" r="4.500" fill="#fff" /><path d="M2 20c0-9 15-9 15 0z" fill="#fff" /></svg>
        </Account>
      </TabRow>

      <Ribbon>
        {groups.map((g) => (
          <Group key={g.name} $w={g.w}>
            <GroupItems>
              <BigButton item={g.items[0]} />
              {g.name === "Charts" && (
                <MiniGrid>
                  {miniIcons.map((icon, i) => (
                    <Mini key={i} type="button" aria-label={`Chart type ${i + 1}`}>{icon}<Caret /></Mini>
                  ))}
                </MiniGrid>
              )}
              {g.items.slice(1).map((item) => <BigButton key={item.icon} item={item} />)}
            </GroupItems>
            <GroupName>{g.name}</GroupName>
            {g.name === "Charts" && (
              <Launcher type="button" aria-label="Chart options">
                <svg width="7" height="7" viewBox="0 0 7 7" fill="none"><path d="M.5 5V.5H5M2.500 2.500l3 3M6.500 3v3.500H3" stroke="#777" /></svg>
              </Launcher>
            )}
          </Group>
        ))}
        <Collapse type="button" aria-label="Collapse the ribbon">
          <svg width="8" height="6" viewBox="0 0 8 6" fill="none"><path d="M1 5l3-3 3 3" stroke="#666" strokeWidth="1.600" /></svg>
        </Collapse>
      </Ribbon>

      <FormulaBar>
        <Box $w={112}>
          <NameInput aria-label="Name box" defaultValue="A2" />
          <BarButton $w={16} type="button" aria-label="Names"><Caret s={6} /></BarButton>
        </Box>
        <Grip><svg width="2" height="9" viewBox="0 0 2 9"><path d="M0 0h2v1H0zM0 3h2v1H0zM0 6h2v1H0z" fill="#aaa" /></svg></Grip>
        <Box $w={88}>
          <BarButton type="button" aria-label="Cancel"><svg width="9" height="9" viewBox="0 0 9 9"><path d="M1 1l7 7M8 1L1 8" stroke="#b9b9b9" strokeWidth="1.400" /></svg></BarButton>
          <BarButton type="button" aria-label="Enter"><svg width="10" height="9" viewBox="0 0 10 9" fill="none"><path d="M1 5l3 3 5-7" stroke="#b9b9b9" strokeWidth="1.600" /></svg></BarButton>
          <BarButton type="button" aria-label="Insert function"><FxText>f<sub>x</sub></FxText></BarButton>
        </Box>
        <BoxGap />
        <Box>
          <FormulaInput aria-label="Formula" defaultValue="1" />
          <Chevron type="button" aria-label="Expand formula bar"><svg width="8" height="6" viewBox="0 0 8 6" fill="none"><path d="M1 1l3 3 3-3" stroke="#666" strokeWidth="1.600" /></svg></Chevron>
        </Box>
      </FormulaBar>

      <SheetArea>
        <GridPane>
          <Grid>
            <colgroup>
              <col width={21} />
              {wideCols.map((w) => <col key={w} width={w} />)}
              {letters.map((l, i) => <col key={l} width={i % 5 === 4 ? 52 : 51} />)}
            </colgroup>
            <thead>
              <tr>
                <Corner><svg width="9" height="9" viewBox="0 0 9 9"><path d="M9 0v9H0z" fill="#d9d9d9" /></svg></Corner>
                <ColHead $on scope="col">A</ColHead>
                {["B", "C", ...letters].map((l) => <ColHead key={l} scope="col">{l}</ColHead>)}
              </tr>
            </thead>
            <tbody>
              <Row $h={22}>
                <RowHead scope="row">1</RowHead>
                {["ID", "NAME", "FAMILY NAME"].map((h) => (
                  <HeadCell key={h}>
                    <HeadInner>
                      <span />
                      {h}
                      <FilterButton type="button" aria-label={`Filter ${h}`}><Caret s={6} c="#555" /></FilterButton>
                    </HeadInner>
                  </HeadCell>
                ))}
                <td colSpan={16} />
              </Row>
              {people.map((p, i) => (
                <Row key={i} $h={rowHeight(i + 2)}>
                  <RowHead scope="row" $on={i === 0}>{i + 2}</RowHead>
                  {p.map((v, c) => (
                    <Cell key={c} $band={i % 2 === 0} $last={c === 2}>
                      {c === 0 && v && <ErrorMark />}
                      {v}
                    </Cell>
                  ))}
                  <td colSpan={16} />
                </Row>
              ))}
              {emptyRows.map((n) => (
                <Row key={n} $h={rowHeight(n)}>
                  <RowHead scope="row">{n}</RowHead>
                  <td colSpan={19} />
                </Row>
              ))}
            </tbody>
          </Grid>
        </GridPane>
        <VScroll>
          <ScrollButton type="button" aria-label="Scroll up"><svg width="6" height="4" viewBox="0 0 6 4"><path d="M0 4h6L3 0z" fill="#666" /></svg></ScrollButton>
          <VThumb />
          <ScrollButton type="button" aria-label="Scroll down"><Caret s={6} c="#666" /></ScrollButton>
        </VScroll>

        <Selection />
        <Warning type="button" aria-label="Number stored as text">
          <svg width="14" height="15" viewBox="0 0 14 15"><path d="M7 2l5.500 5.500L7 13 1.500 7.500z" fill="#f6f276" stroke="#a09a4c" /><path d="M7 4.500v4M7 9.500V11" stroke="#555" strokeWidth="1.300" /></svg>
        </Warning>
        <ShapeButton type="button">Staff Form</ShapeButton>

        <Dialog onSubmit={(e) => e.preventDefault()}>
          <DialogTitle>
            <DialogCaption>Staff Form</DialogCaption>
            <CloseButton type="button" aria-label="Close form">
              <svg width="10" height="8" viewBox="0 0 10 8"><path d="M2 1l6 6M8 1L2 7" stroke="#7a3a34" strokeWidth="3.400" /><path d="M2 1l6 6M8 1L2 7" stroke="#fff" strokeWidth="2" /></svg>
            </CloseButton>
          </DialogTitle>
          <Banner>Staff Information</Banner>
          <Field $after={8}><FieldName>ID</FieldName><FieldInput type="text" /></Field>
          <Field $after={20}><FieldName>NAME</FieldName><FieldInput type="text" /></Field>
          <Field $after={22}><FieldName>FAMILY</FieldName><FieldInput type="text" /></Field>
          <Actions>
            <ActionButton type="submit">ADD</ActionButton>
            <ActionButton type="reset">CLEAR</ActionButton>
          </Actions>
        </Dialog>
        <Pointer width="16" height="14" viewBox="0 0 16 14">
          <circle cx="8" cy="5" r="4" fill="#e02a1c" />
          <path d="M5 1.500h4v3.500h3.500v4H9v3.500H5V9H1.500V5H5z" fill="#fff" stroke="#111" strokeWidth="1.400" />
        </Pointer>
      </SheetArea>

      <SheetTabs>
        <NavArrows>
          <svg width="4" height="6" viewBox="0 0 4 6"><path d="M4 0v6L0 3z" fill="#bdbdbd" /></svg>
          <svg width="4" height="6" viewBox="0 0 4 6"><path d="M0 0v6l4-3z" fill="#bdbdbd" /></svg>
        </NavArrows>
        <SheetTab type="button">LIST</SheetTab>
        <AddSheet type="button" aria-label="New sheet">
          <svg width="14" height="14" viewBox="0 0 14 14" fill="none"><circle cx="7" cy="7" r="6" stroke="#888" fill="#fff" /><path d="M7 4v6M4 7h6" stroke="#555" strokeWidth="1.600" /></svg>
        </AddSheet>
        <SheetGrip><svg width="2" height="9" viewBox="0 0 2 9"><path d="M0 0h2v1H0zM0 3h2v1H0zM0 6h2v1H0z" fill="#aaa" /></svg></SheetGrip>
        <HTrack>
          <ScrollButton type="button" aria-label="Scroll left"><svg width="4" height="6" viewBox="0 0 4 6"><path d="M4 0v6L0 3z" fill="#666" /></svg></ScrollButton>
          <HThumb />
          <ScrollButton type="button" aria-label="Scroll right"><svg width="4" height="6" viewBox="0 0 4 6"><path d="M0 0v6l4-3z" fill="#666" /></svg></ScrollButton>
        </HTrack>
      </SheetTabs>

      <StatusBar>
        <StatusText>READY</StatusText>
        <ViewButton type="button" $on aria-label="Normal view"><svg width="11" height="11" viewBox="0 0 11 11" fill="none"><path d="M.5.5h10v10H.5zM4 0v11M7 0v11M0 4h11M0 7h11" stroke="#e6f2ea" /></svg></ViewButton>
        <ViewButton type="button" aria-label="Page layout view"><svg width="11" height="11" viewBox="0 0 11 11" fill="none"><path d="M.5.5h10v10H.5zM3 2.500h5v6H3zM4 4.500h3M4 6.500h3" stroke="#cfe3d7" /></svg></ViewButton>
        <ViewButton type="button" aria-label="Page break view"><svg width="11" height="11" viewBox="0 0 11 11"><path d="M.5.5h10v10H.5z" fill="none" stroke="#cfe3d7" /><path d="M1 1h3v6H1zM5 1h3v6H5z" fill="#e6f2ea" /></svg></ViewButton>
        <ZoomStep type="button" aria-label="Zoom out"><svg width="6" height="6" viewBox="0 0 6 6"><path d="M0 2h5v2H0z" fill="#fff" /></svg></ZoomStep>
        <ZoomRange type="range" aria-label="Zoom" defaultValue={50} />
        <ZoomStep type="button" aria-label="Zoom in"><svg width="7" height="7" viewBox="0 0 7 7"><path d="M0 3.500h7M3.500 0v7" stroke="#fff" strokeWidth="1.600" /></svg></ZoomStep>
        <ZoomValue>100 %</ZoomValue>
      </StatusBar>
      <TaskBar />
    </Page>
  );
}
